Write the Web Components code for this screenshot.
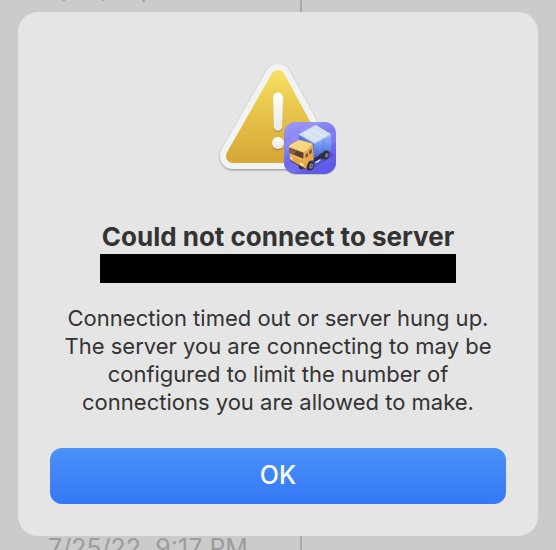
<!DOCTYPE html>
<html lang="en">
<head>
<meta charset="utf-8">
<meta name="viewport" content="width=device-width, initial-scale=1">
<title>Could not connect to server</title>
<style>
    html, body {
        height: 100%;
        margin: 0;
        overflow: hidden;
    }
    body {
        display: grid;
        background: #cbcbcb;
        font-family: Inter, "Liberation Sans", sans-serif;
        color: #333333;
    }
    /* the sheet is stacked over the list */
    list-backdrop, alert-dialog {
        grid-area: 1 / 1;
        min-height: 0;
    }
</style>
</head>
<body>
    <list-backdrop>
        <span>7/25/22, 9:17 PM</span>
        <span>7/25/22, 9:17 PM</span>
    </list-backdrop>
    <alert-dialog>
        <alert-icon slot="icon"></alert-icon>
        <span slot="title">Could not connect to server</span>
        <span slot="message">Connection timed out or server hung up.<br>The server you are connecting to may be configured to limit the number of connections you are allowed to make.</span>
        <alert-button slot="action">OK</alert-button>
    </alert-dialog>

<script>
class ListBackdrop extends HTMLElement {
    constructor(){
        super();
        this.attachShadow({mode:'open'});
    }
    connectedCallback(){
        this.shadowRoot.innerHTML = `
            <div class="column"><slot></slot></div>
            <div class="column"></div>
            ${this.getStyles()}
        `;
    }
    getStyles(){
        return `
            <style>
                :host{
                    display: grid;
                    grid-template-columns: 302fr 254fr;
                    overflow: hidden;
                    color: #9c9c9c;
                    font-size: 25px;
                    line-height: 28px;
                }
                .column{
                    display: flex;
                    flex-direction: column;
                    justify-content: space-between;
                    margin: -25px 0 -12px;
                    padding-left: 48px;
                    white-space: nowrap;
                }
                .column:first-child{
                    border-right: 2px solid #a8a8a8;
                }
            </style>
        `;
    }
}
customElements.define("list-backdrop", ListBackdrop);

class AlertDialog extends HTMLElement {
    constructor(){
        super();
        this.attachShadow({mode:'open'});
    }
    connectedCallback(){
        this.shadowRoot.innerHTML = `
            <section class="alert" role="alertdialog" aria-labelledby="title" aria-describedby="message">
                <slot name="icon"></slot>
                <header class="alert__header">
                    <h1 id="title"><slot name="title"></slot></h1>
                    <div class="alert__redacted"></div>
                </header>
                <p id="message"><slot name="message"></slot></p>
                <slot name="action"></slot>
            </section>
            ${this.getStyles()}
        `;
    }
    getStyles(){
        return `
            <style>
                :host{
                    display: block;
                    z-index: 1;
                    padding: 12px 18px 14px;
                }
                .alert{
                    display: flex;
                    flex-direction: column;
                    align-items: center;
                    box-sizing: border-box;
                    padding: 43px 32px 32px;
                    border-radius: 20px;
                    background: #e5e5e5;
                }
                .alert__header{
                    margin-top: 36px;
                    text-align: center;
                }
                h1{
                    margin: 0;
                    padding: 0 2px;
                    font-size: 26px;
                    font-weight: 700;
                    line-height: 32px;
                }
                .alert__redacted{
                    height: 29px;
                    margin-top: 1px;
                    background: #000000;
                }
                p{
                    margin: 21px 0 32px;
                    font-size: 22px;
                    line-height: 28px;
                    text-align: center;
                }
            </style>
        `;
    }
}
customElements.define("alert-dialog", AlertDialog);

class AlertButton extends HTMLElement {
    constructor(){
        super();
        this.attachShadow({mode:'open'});
    }
    connectedCallback(){
        this.shadowRoot.innerHTML = `
            <button type="button"><slot></slot></button>
            ${this.getStyles()}
        `;
    }
    getStyles(){
        return `
            <style>
                :host{
                    display: block;
                    width: 100%;
                }
                button{
                    display: block;
                    width: 100%;
                    height: 56px;
                    padding: 0 0 2px;
                    border: 0;
                    border-radius: 12px;
                    background: linear-gradient(#4b91f8, #3478f6);
                    color: #ffffff;
                    font: 500 25px/32px Inter, "Liberation Sans", sans-serif;
                }
            </style>
        `;
    }
}
customElements.define("alert-button", AlertButton);

class AlertIcon extends HTMLElement {
    constructor(){
        super();
        this.attachShadow({mode:'open'});
    }
    connectedCallback(){
        this.shadowRoot.innerHTML = `
            <svg viewBox="0 0 136 130" aria-hidden="true">
                <defs>
                    <linearGradient id="yellow" gradientUnits="userSpaceOnUse" x1="0" y1="14" x2="0" y2="108">
                        <stop offset="0" stop-color="#f7e263"/>
                        <stop offset=".5" stop-color="#e6c248"/>
                        <stop offset="1" stop-color="#d6a636"/>
                    </linearGradient>
                    <linearGradient id="mark" x1="0" y1="0" x2="0" y2="1">
                        <stop offset="0" stop-color="#ffffff"/>
                        <stop offset="1" stop-color="#e9e8e2"/>
                    </linearGradient>
                    <linearGradient id="app" x1="0" y1="0" x2=".4" y2="1">
                        <stop offset="0" stop-color="#a09ef6"/>
                        <stop offset=".5" stop-color="#7a76f0"/>
                        <stop offset="1" stop-color="#605ae8"/>
                    </linearGradient>
                    <linearGradient id="box" x1="0" y1="0" x2="0" y2="1">
                        <stop offset="0" stop-color="#91b7fa"/>
                        <stop offset=".5" stop-color="#6a90f0"/>
                        <stop offset="1" stop-color="#4459d0"/>
                    </linearGradient>
                    <linearGradient id="cab" x1="0" y1="0" x2="0" y2="1">
                        <stop offset="0" stop-color="#f9cb6c"/>
                        <stop offset="1" stop-color="#e9a548"/>
                    </linearGradient>
                    <filter id="shadow" x="-20%" y="-20%" width="140%" height="140%">
                        <feDropShadow dx="0" dy="1" stdDeviation="1.2" flood-opacity=".4"/>
                    </filter>
                    <filter id="soft" x="-20%" y="-20%" width="140%" height="140%">
                        <feDropShadow dx="0" dy="1.2" stdDeviation=".6" flood-color="#8a6a10" flood-opacity=".7"/>
                    </filter>
                    <clipPath id="tile"><rect x="222" y="201" width="156" height="156" rx="35"/></clipPath>
                </defs>

                <!-- warning sign -->
                <g stroke-linejoin="round">
                    <path d="M68 22 111 101H23Z" fill="#f3f3f3" stroke="#f3f3f3" stroke-width="26" filter="url(#shadow)"/>
                    <path d="M68 22 111 101H23Z" fill="url(#yellow)" stroke="url(#yellow)" stroke-width="14"/>
                </g>
                <g fill="url(#mark)" filter="url(#soft)">
                    <path d="M63 42.500a5 5 0 0 1 10 0L72.200 71.500a4.200 4.200 0 0 1-8.400 0Z"/>
                    <circle cx="68" cy="88" r="6"/>
                </g>

                <!-- app badge, drawn at three times its size -->
                <g transform="scale(.33333)">
                    <rect x="222" y="201" width="156" height="156" rx="35" fill="url(#app)" filter="url(#shadow)"/>
                    <g clip-path="url(#tile)">
                        <path d="M222 267 300 201H338L222 299Z" fill="#ffffff" opacity=".08"/>
                        <path d="M222 345 378 225V262L256 357H222Z" fill="#ffffff" opacity=".07"/>
                        <path d="M242 320 293 348 372 304 362 288Z" fill="#4940bd" opacity=".5"/>
                    </g>
                    <path d="M267 238 313 265V314L267 292Z" fill="#5873dc"/>
                    <path d="M313 265 363 238V286L313 314Z" fill="url(#box)"/>
                    <path d="M341 250V298" stroke="#4e70db" stroke-width="1.500" fill="none"/>
                    <path d="M267 238 317 210 363 237 313 265Z" fill="#d5e2ef"/>
                    <path d="M283 230 329 257M300 220 346 247" stroke="#eef4fa" stroke-width="2" fill="none"/>
                    <path d="M267 239 313 266 363 239" stroke="#b9d5fb" stroke-width="2" fill="none"/>
                    <path d="M308 312 352 286V300L312 322Z" fill="#27305c"/>
                    <g fill="#30313d">
                        <ellipse cx="347" cy="300" rx="11" ry="14" transform="rotate(18 347 300)"/>
                        <ellipse cx="335" cy="304" rx="7" ry="9"/>
                        <ellipse cx="301" cy="332" rx="12" ry="15" transform="rotate(18 301 332)"/>
                        <ellipse cx="275" cy="336" rx="9" ry="7"/>
                    </g>
                    <ellipse cx="350" cy="301" rx="5" ry="7" fill="#747784" transform="rotate(18 350 301)"/>
                    <path d="M237 276 284 291 287 341 241 315Z" fill="url(#cab)"/>
                    <path d="M284 291 309 268 311 316C298 313 292 324 289 340L285 341Z" fill="#e9a64a"/>
                    <path d="M237 275Q238 271 243 268L262 257Q267 254 273 256L304 265Q309 267 306 271L288 288Q284 292 279 290Z" fill="#fbd47c"/>
                    <path d="M238 278 281 293 280 311 238 294Z" fill="#5b442d"/>
                    <path d="M239 282 259 289 252 298 239 293Z" fill="#89653b"/>
                    <path d="M287 299 294 293V303L287 309ZM298 288 305 281V293L298 299Z" fill="#66533f"/>
                    <path d="M239 301 283 323M240 308 284 331" stroke="#c98a3a" stroke-width="2" fill="none"/>
                    <path d="M241 305 248 309V314L241 310ZM270 322 281 328V334L270 328Z" fill="#fff0b9"/>
                    <path d="M241 316 286 342" stroke="#5d4430" stroke-width="3"/>
                    <ellipse cx="304" cy="333" rx="6" ry="8" fill="#8a898d" transform="rotate(18 304 333)"/>
                    <ellipse cx="305" cy="333" rx="3" ry="4" fill="#55545e"/>
                    <path d="M315 321 331 312V317L318 325Z" fill="#b8e3e9"/>
                </g>
            </svg>
            ${this.getStyles()}
        `;
    }
    getStyles(){
        return `
            <style>
                :host{
                    display: block;
                }
                svg{
                    display: block;
                    width: 136px;
                    height: 130px;
                }
            </style>
        `;
    }
}
customElements.define("alert-icon", AlertIcon);
</script>
</body>
</html>
